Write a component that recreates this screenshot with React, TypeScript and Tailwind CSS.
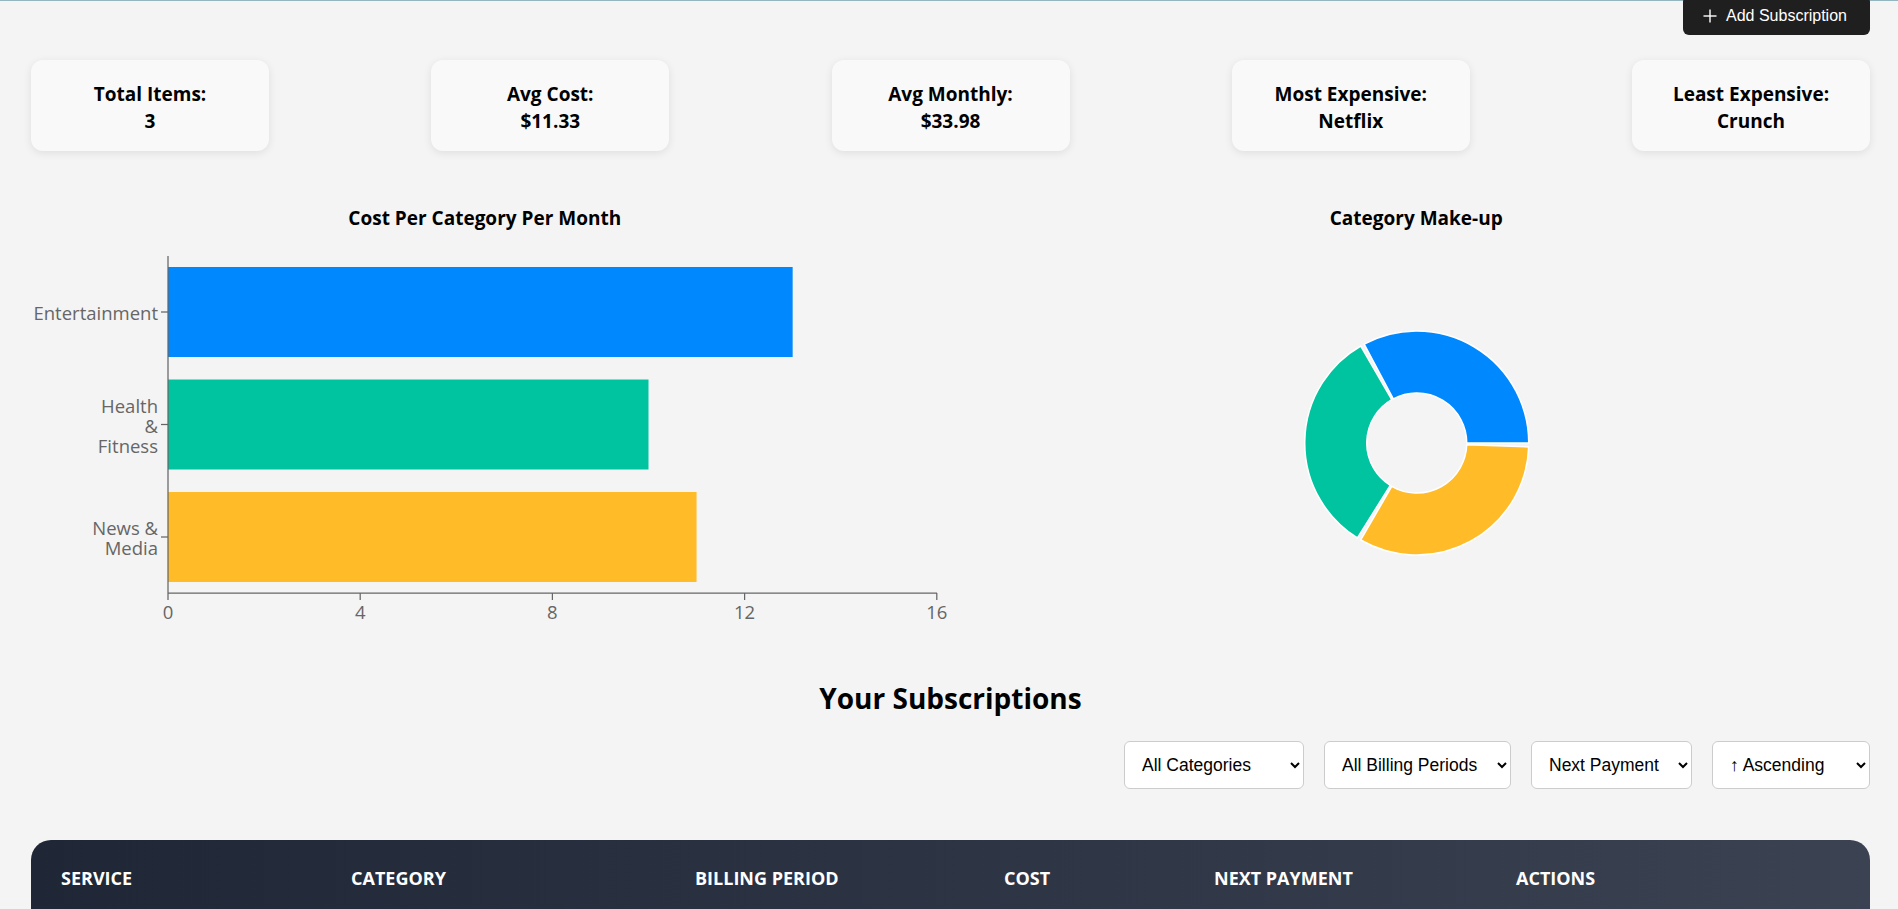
import React from "react";

const COLORS = ["#0088FE", "#00C49F", "#FFBB28"];

const stats = [
  { label: "Total Items:", value: "3" },
  { label: "Avg Cost:", value: "$11.33" },
  { label: "Avg Monthly:", value: "$33.98" },
  { label: "Most Expensive:", value: "Netflix" },
  { label: "Least Expensive:", value: "Crunch" },
];

const categories = [
  { name: ["Entertainment"], cost: 13, y: 81 },
  { name: ["Health", "&", "Fitness"], cost: 10, y: 193.5 },
  { name: ["News &", "Media"], cost: 11, y: 306 },
];

const seg = "'Open Sans', 'Noto Sans', sans-serif";

// x axis: 0 at 137, 48.05px per unit
const xs = (v: number) => 137 + v * 48.05;

const BarChart = () => (
  <svg width="907" height="400" className="overflow-visible" style={{ fontFamily: seg }}>
    {categories.map((c, i) => (
      <g key={i}>
        <rect x={137} y={c.y - 45} width={xs(c.cost) - 137} height={90} fill={COLORS[i]} />
        <line x1={130} x2={137} y1={c.y} y2={c.y} stroke="#666" strokeWidth={1.25} />
        <text x={127} textAnchor="end" fill="#666" fontSize={18.5} dominantBaseline="central">
          {c.name.map((n, j) => (
            <tspan key={j} x={127} y={c.y + (j - (c.name.length - 1) / 2) * 20}>
              {n}
            </tspan>
          ))}
        </text>
      </g>
    ))}
    <line x1={137} x2={137} y1={25} y2={362} stroke="#666" strokeWidth={1.25} />
    <line x1={137} x2={906} y1={362} y2={362} stroke="#666" strokeWidth={1.25} />
    {[0, 4, 8, 12, 16].map((t) => (
      <g key={t}>
        <line x1={xs(t)} x2={xs(t)} y1={362} y2={369} stroke="#666" strokeWidth={1.25} />
        <text x={xs(t)} y={380} textAnchor="middle" dominantBaseline="central" fill="#666" fontSize={18.5}>
          {t}
        </text>
      </g>
    ))}
  </svg>
);

const arc = (cx: number, cy: number, R: number, r: number, a0: number, a1: number) => {
  const rad = (d: number) => (d * Math.PI) / 180;
  const p = (rr: number, a: number) => `${cx + rr * Math.cos(rad(a))} ${cy - rr * Math.sin(rad(a))}`;
  const large = a1 - a0 > 180 ? 1 : 0;
  return `M ${p(R, a0)} A ${R} ${R} 0 ${large} 0 ${p(R, a1)} L ${p(r, a1)} A ${r} ${r} 0 ${large} 1 ${p(r, a0)} Z`;
};

const Donut = () => (
  <svg width="907" height="400">
    {[0, 120, 240].map((start, i) => (
      <path
        key={i}
        d={arc(453.75, 212, 112, 50, start, start + 118)}
        fill={COLORS[i]}
        stroke="#fff"
        strokeWidth={1.5}
      />
    ))}
  </svg>
);

export default function App() {
  return (
    <div
      className="min-h-screen bg-[#f4f4f4] border-t border-[#93b6bf] pl-[31px] pr-[28px] text-black"
      style={{ fontFamily: seg }}
    >
      <div className="flex justify-end">
        <button className="-mt-[5px] flex items-center gap-[9px] h-[39px] w-[187px] pl-[20px] rounded-md bg-[#1f1f1f] text-white text-[16px] font-['Liberation_Sans',Arial,sans-serif]">
          <svg width="14" height="14" viewBox="0 0 14 14" stroke="white" strokeWidth="1.4">
            <line x1="7" y1="0.5" x2="7" y2="13.5" />
            <line x1="0.5" y1="7" x2="13.5" y2="7" />
          </svg>
          Add Subscription
        </button>
      </div>

      <div className="mt-[25px] flex justify-between">
        {stats.map((s) => (
          <div
            key={s.label}
            className="w-[238px] h-[91px] pt-[5px] rounded-xl bg-[#f9f9f9] shadow-[0_2px_8px_rgba(0,0,0,0.09)] flex flex-col items-center justify-center text-[19px] font-bold leading-[27px]"
          >
            <span>{s.label}</span>
            <span>{s.value}</span>
          </div>
        ))}
      </div>

      <div className="mt-[54px] grid grid-cols-2 gap-6">
        <div>
          <h3 className="text-center text-[19px] font-bold leading-[26px]">Cost Per Category Per Month</h3>
          <BarChart />
        </div>
        <div>
          <h3 className="text-center text-[19px] font-bold leading-[26px]">Category Make-up</h3>
          <Donut />
        </div>
      </div>

      <h2 className="mt-[48px] text-center text-[28px] font-bold leading-[38px]">Your Subscriptions</h2>

      <div className="mt-[24px] flex justify-end gap-[20px] font-['Liberation_Sans',Arial,sans-serif] text-[17.5px]">
        <select className="w-[180px] h-[48px] pl-[13px] rounded-md border border-[#ccc] bg-white">
          <option>All Categories</option>
          <option>Entertainment</option>
          <option>Health &amp; Fitness</option>
          <option>News &amp; Media</option>
        </select>
        <select className="w-[187px] h-[48px] pl-[13px] rounded-md border border-[#ccc] bg-white">
          <option>All Billing Periods</option>
          <option>Monthly</option>
          <option>Yearly</option>
        </select>
        <select className="w-[161px] h-[48px] pl-[13px] rounded-md border border-[#ccc] bg-white">
          <option>Next Payment</option>
          <option>Cost</option>
          <option>Name</option>
        </select>
        <select className="w-[158px] h-[48px] pl-[13px] rounded-md border border-[#ccc] bg-white">
          <option>↑ Ascending</option>
          <option>↓ Descending</option>
        </select>
      </div>

      <div className="mt-[51px] rounded-t-[20px] overflow-hidden bg-gradient-to-r from-[#1f2737] to-[#3b4252]">
        <table className="w-full table-fixed text-white">
          <colgroup>
            <col className="w-[290px]" />
            <col className="w-[344px]" />
            <col className="w-[309px]" />
            <col className="w-[210px]" />
            <col className="w-[302px]" />
            <col />
          </colgroup>
          <thead>
            <tr className="text-left uppercase text-[18px] font-bold">
              <th className="px-[30px] py-[25px] leading-[26px]">Service</th>
              <th className="px-[30px] py-[25px] leading-[26px]">Category</th>
              <th className="px-[30px] py-[25px] leading-[26px]">Billing Period</th>
              <th className="px-[30px] py-[25px] leading-[26px]">Cost</th>
              <th className="px-[30px] py-[25px] leading-[26px]">Next Payment</th>
              <th className="px-[30px] py-[25px] leading-[26px]">Actions</th>
            </tr>
          </thead>
        </table>
        <div className="h-[40px]" />
      </div>
    </div>
  );
}
